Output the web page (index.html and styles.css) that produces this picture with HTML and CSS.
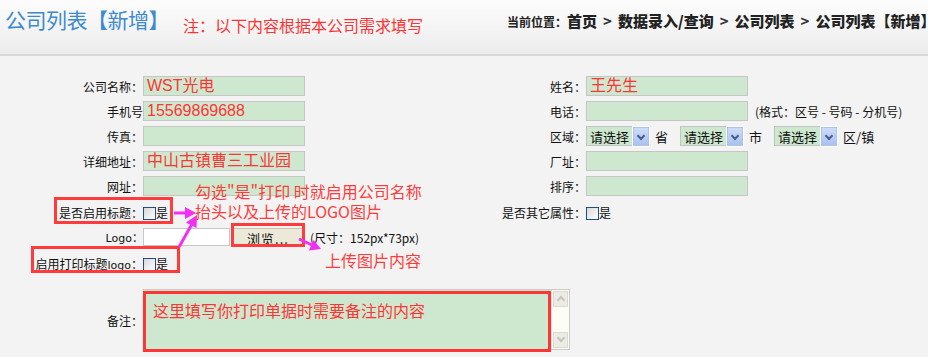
FILE: index.html
```html
<!DOCTYPE html>
<html lang="zh-CN">
<head>
    <meta charset="UTF-8">
    <title>公司列表【新增】</title>
    <link rel="stylesheet" href="styles.css">
</head>
<body>
    <div class="header">
        <h1 class="title">公司列表【新增】</h1>
        <span class="note">注：以下内容根据本公司需求填写</span>
        <div class="crumbs">
            <span class="here">当前位置：</span><b>首页</b><i>&gt;</i><b>数据录入/查询</b><i>&gt;</i><b>公司列表</b><i>&gt;</i><b>公司列表【新增】</b>
        </div>
    </div>

    <div class="form">
        <div class="col col-left">
            <div class="row"><label>公司名称：</label><div class="field filled">WST光电</div></div>
            <div class="row"><label>手机号</label><div class="field filled">15569869688</div></div>
            <div class="row"><label>传真：</label><div class="field"></div></div>
            <div class="row"><label>详细地址：</label><div class="field filled">中山古镇曹三工业园</div></div>
            <div class="row"><label>网址：</label><div class="field"></div></div>
            <div class="row row-check"><label>是否启用标题：</label><span class="check"></span>是</div>
            <div class="row row-logo">
                <label class="latin">Logo：</label>
                <div class="file-input"></div>
                <button type="button" class="browse">浏览...</button>
                <span class="size-hint">(尺寸：152px*73px)</span>
            </div>
            <div class="row row-print"><label>启用打印标题<span class="latin">logo</span>：</label><span class="check"></span>是</div>
            <div class="row row-memo">
                <label>备注：</label>
                <div class="memo">
                    <div class="memo-text">这里填写你打印单据时需要备注的内容</div>
                    <div class="scrollbar">
                        <span class="sb-btn up"></span>
                        <span class="sb-btn down"></span>
                    </div>
                </div>
            </div>
        </div>

        <div class="col col-right">
            <div class="row"><label>姓名：</label><div class="field filled">王先生</div></div>
            <div class="row"><label>电话：</label><div class="field"></div><span class="hint">(格式：区号 - 号码 - 分机号)</span></div>
            <div class="row">
                <label>区域：</label>
                <div class="select">请选择<span class="drop"></span></div><span class="unit">省</span>
                <div class="select">请选择<span class="drop"></span></div><span class="unit">市</span>
                <div class="select">请选择<span class="drop"></span></div><span class="unit">区/镇</span>
            </div>
            <div class="row"><label>厂址：</label><div class="field"></div></div>
            <div class="row"><label>排序：</label><div class="field"></div></div>
            <div class="row row-check"><label>是否其它属性：</label><span class="check"></span>是</div>
        </div>
    </div>

    <!-- annotations drawn over the form -->
    <div class="tip tip-title">勾选"是"打印 时就启用公司名称<br>抬头以及上传的LOGO图片</div>
    <div class="tip tip-upload">上传图片内容</div>
    <svg class="marks" width="928" height="357" viewBox="0 0 928 357">
        <g fill="none" stroke="#ff3b3b" stroke-width="3">
            <rect x="55.5" y="198.5" width="116" height="24"/>
            <rect x="32.5" y="247.5" width="146" height="24"/>
            <rect x="232.5" y="224.5" width="71" height="21"/>
        </g>
        <g fill="#f22ff2" stroke="#f22ff2">
            <line x1="174" y1="213" x2="187" y2="213" stroke-width="3"/>
            <polygon points="185,207 196,213 185,219" stroke="none"/>
            <line x1="179" y1="247" x2="192" y2="224" stroke-width="3"/>
            <polygon points="197,215 196.5,228 186,222.5" stroke="none"/>
            <line x1="299" y1="239" x2="312" y2="245" stroke-width="3"/>
            <polygon points="321,249 309,250.5 313.5,240" stroke="none"/>
        </g>
    </svg>
</body>
</html>
```

FILE: styles.css
```css
body {
    margin: 0;
    position: relative;
    width: 928px;
    height: 357px;
    overflow: hidden;
    background: #f3f3f3;
    font-family: "Noto Sans CJK SC", "Liberation Sans", sans-serif;
    font-size: 12px;
    color: #111;
}

.header {
    height: 54px;
    border-bottom: 2px solid #d8d8d8;
    background: linear-gradient(#fdfdfd, #ececec);
    display: flex;
    align-items: flex-start;
    padding-left: 5px;
    white-space: nowrap;
    overflow: hidden;
}

.title {
    margin: 6px 0 0;
    font-size: 21px;
    font-weight: normal;
    line-height: 26px;
    color: #3d8ad0;
    letter-spacing: -0.5px;
}

.note {
    margin: 15px 0 0 14px;
    font-size: 16px;
    line-height: 20px;
    color: #ff3333;
}

.crumbs {
    margin: 11px 0 0 84px;
    flex-shrink: 0;
    line-height: 20px;
    font-size: 15px;
    font-weight: bold;
    color: #222;
}

.crumbs .here {
    font-size: 12px;
}

.crumbs i {
    font-style: normal;
    margin: 0 6px;
    color: #333;
}

/* form */

.form {
    display: flex;
    padding-top: 20px;
}

.col-left {
    width: 480px;
}

.row {
    display: flex;
    align-items: center;
    height: 20px;
    margin-bottom: 5px;
    white-space: nowrap;
}

.row label {
    flex-shrink: 0;
    text-align: right;
}

.col-left label {
    width: 143px;
}

.col-right label {
    width: 106px;
}

.latin {
    font-family: "DejaVu Sans", sans-serif;
    font-size: 11px;
}

.field {
    height: 18px;
    border: 1px solid #c6c6c6;
    background: #cde8cf;
    color: #ff3535;
    font-size: 16px;
    line-height: 18px;
    padding-left: 3px;
    width: 157px;
    overflow: hidden;
}

.filled {
    font-family: "Liberation Sans", "Noto Sans CJK SC", sans-serif;
}

.hint {
    margin-left: 7px;
}

.select {
    display: flex;
    align-items: center;
    justify-content: space-between;
    width: 59px;
    height: 18px;
    padding-left: 3px;
    border: 1px solid #c3c3c3;
    background: #cde8cf;
    font-size: 13px;
}

.drop {
    width: 14px;
    height: 17px;
    border: 1px solid #aec3ea;
    outline: 1px solid #fff;
    background: linear-gradient(#cddcfb, #a8c2f2);
    position: relative;
}

.drop::after {
    content: "";
    position: absolute;
    left: 4px;
    top: 5px;
    width: 4px;
    height: 4px;
    border-right: 2px solid #4a5e87;
    border-bottom: 2px solid #4a5e87;
    transform: rotate(45deg);
}

.unit {
    margin: 0 12px 0 5px;
    font-size: 13px;
}

.row-check {
    height: 23px;
}

.check {
    width: 11px;
    height: 11px;
    border: 1px solid #1d4f80;
    background: linear-gradient(135deg, #d8d8d8, #fff);
    margin: 2px 0 0;
}

.row-logo {
    height: 22px;
    margin-top: -3px;
    margin-bottom: 3px;
}

.file-input {
    width: 85px;
    height: 16px;
    border: 1px solid #c8c8c8;
    background: #fff;
}

.browse {
    margin-left: 3px;
    width: 70px;
    height: 19px;
    padding: 0;
    border: 1px solid #c7c4b4;
    background: #ece9d8;
    font-family: inherit;
    font-size: 13px;
    letter-spacing: 1px;
    color: #111;
}

.size-hint {
    margin-left: 7px;
}

.row-print {
    height: 24px;
}

.row-memo {
    height: 61px;
    margin-top: 15px;
}

.memo {
    display: flex;
    width: 430px;
    height: 59px;
    border: 1px solid #cacaca;
    background: #cde8cf;
    margin-top: -2px;
}

.memo-text {
    width: 395px;
    height: 49px;
    margin: 1px 0 0 -1px;
    padding: 6px 0 0 7px;
    border: 3px solid #ff3535;
    color: #ff3535;
    font-size: 16px;
    line-height: 20px;
}

.scrollbar {
    margin-left: auto;
    width: 17px;
    background: #fdfdf6;
    border-left: 1px solid #e6e6e0;
    display: flex;
    flex-direction: column;
    justify-content: space-between;
    padding: 1px 0;
}

.sb-btn {
    position: relative;
    height: 14px;
    margin: 0 1px;
    border: 1px solid #dcdbd2;
    background: #ecebe4;
}

.sb-btn::after {
    content: "";
    position: absolute;
    left: 4px;
    width: 4px;
    height: 4px;
    border-left: 2px solid #c6c5bd;
    border-top: 2px solid #c6c5bd;
}

.sb-btn.up::after {
    top: 5px;
    transform: rotate(45deg);
}

.sb-btn.down::after {
    top: 2px;
    transform: rotate(225deg);
}

/* annotations */

.tip {
    position: absolute;
    color: #ff3c3c;
    font-size: 16px;
    line-height: 20px;
    white-space: nowrap;
}

.tip-title {
    left: 195px;
    top: 181px;
}

.tip-upload {
    left: 325px;
    top: 250px;
}

.marks {
    position: absolute;
    left: 0;
    top: 0;
    pointer-events: none;
}
```
